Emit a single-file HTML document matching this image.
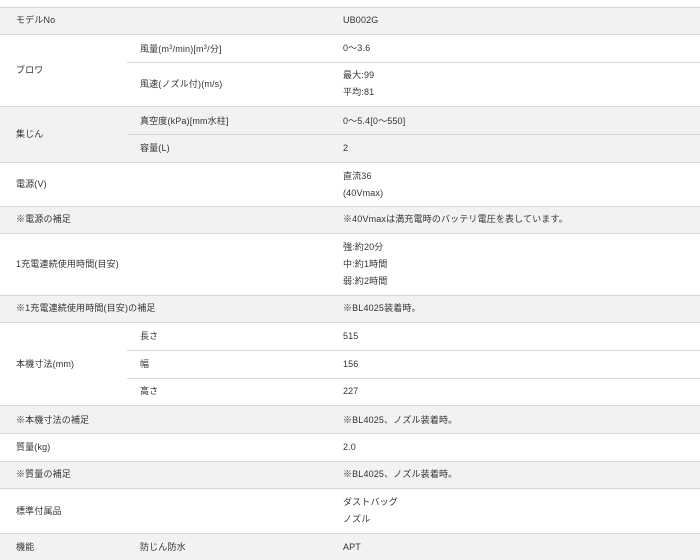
<!DOCTYPE html>
<html><head><meta charset="utf-8"><style>
*{margin:0;padding:0;box-sizing:border-box}
body{width:700px;height:560px;background:#fff;font-family:"Liberation Sans","Noto Sans CJK JP",sans-serif;font-size:9px;letter-spacing:0.15px;color:#333;position:relative;overflow:hidden}
.r{position:absolute;left:0;width:700px;border-top:1px solid #d8d8d8}
.g{background:#f2f2f2}
.t{position:absolute;line-height:17px;white-space:nowrap}
.s{position:absolute;left:127px;width:573px;border-top:1px solid #d8d8d8}
sup{font-size:6px;vertical-align:3px}
</style></head><body>
<div class="r g" style="top:7px;height:27px"></div>
<div class="r" style="top:34px;height:72px"></div>
<div class="s" style="top:62px"></div>
<div class="r g" style="top:106px;height:56px"></div>
<div class="s" style="top:134px"></div>
<div class="r" style="top:162px;height:44px"></div>
<div class="r g" style="top:206px;height:27px"></div>
<div class="r" style="top:233px;height:62px"></div>
<div class="r g" style="top:295px;height:27px"></div>
<div class="r" style="top:322px;height:83px"></div>
<div class="s" style="top:350px"></div>
<div class="s" style="top:378px"></div>
<div class="r g" style="top:405px;height:28px"></div>
<div class="r" style="top:433px;height:28px"></div>
<div class="r g" style="top:461px;height:27px"></div>
<div class="r" style="top:488px;height:45px"></div>
<div class="r g" style="top:533px;height:27px"></div>

<div class="t" style="left:16px;top:12px">モデルNo</div><div class="t" style="left:343px;top:12px">UB002G</div>
<div class="t" style="left:16px;top:62px">ブロワ</div>
<div class="t" style="left:140px;top:40px">風量(m<sup>3</sup>/min)[m<sup>3</sup>/分]</div><div class="t" style="left:343px;top:40px">0～3.6</div>
<div class="t" style="left:140px;top:76px">風速(ノズル付)(m/s)</div><div class="t" style="left:343px;top:67px">最大:99<br>平均:81</div>
<div class="t" style="left:16px;top:126px">集じん</div>
<div class="t" style="left:140px;top:113px">真空度(kPa)[mm水柱]</div><div class="t" style="left:343px;top:113px">0～5.4[0～550]</div>
<div class="t" style="left:140px;top:140px">容量(L)</div><div class="t" style="left:343px;top:140px">2</div>
<div class="t" style="left:16px;top:176px">電源(V)</div><div class="t" style="left:343px;top:168px">直流36<br>(40Vmax)</div>
<div class="t" style="left:16px;top:211px">※電源の補足</div><div class="t" style="left:343px;top:211px">※40Vmaxは満充電時のバッテリ電圧を表しています。</div>
<div class="t" style="left:16px;top:256px">1充電連続使用時間(目安)</div><div class="t" style="left:343px;top:239px">強:約20分<br>中:約1時間<br>弱:約2時間</div>
<div class="t" style="left:16px;top:300px">※1充電連続使用時間(目安)の補足</div><div class="t" style="left:343px;top:300px">※BL4025装着時。</div>
<div class="t" style="left:16px;top:356px">本機寸法(mm)</div>
<div class="t" style="left:140px;top:328px">長さ</div><div class="t" style="left:343px;top:328px">515</div>
<div class="t" style="left:140px;top:356px">幅</div><div class="t" style="left:343px;top:356px">156</div>
<div class="t" style="left:140px;top:383px">高さ</div><div class="t" style="left:343px;top:383px">227</div>
<div class="t" style="left:16px;top:412px">※本機寸法の補足</div><div class="t" style="left:343px;top:412px">※BL4025、ノズル装着時。</div>
<div class="t" style="left:16px;top:439px">質量(kg)</div><div class="t" style="left:343px;top:439px">2.0</div>
<div class="t" style="left:16px;top:466px">※質量の補足</div><div class="t" style="left:343px;top:466px">※BL4025、ノズル装着時。</div>
<div class="t" style="left:16px;top:503px">標準付属品</div><div class="t" style="left:343px;top:494px">ダストバッグ<br>ノズル</div>
<div class="t" style="left:16px;top:539px">機能</div><div class="t" style="left:140px;top:539px">防じん防水</div><div class="t" style="left:343px;top:539px">APT</div>
</body></html>
